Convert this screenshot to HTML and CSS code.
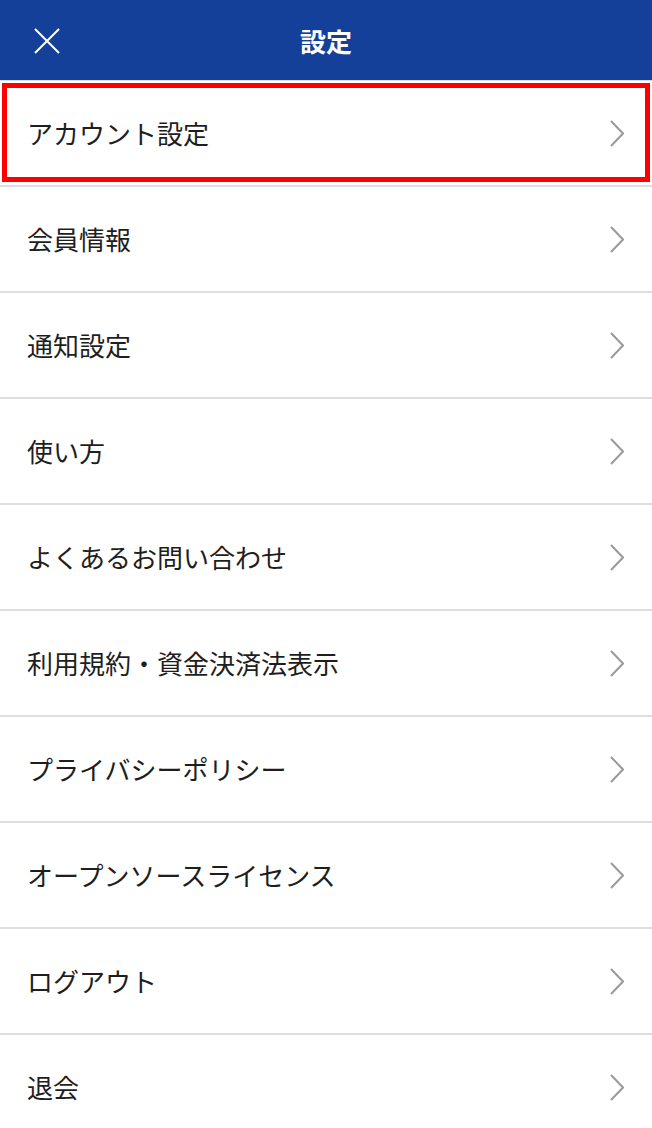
FILE: index.html
```html
<!DOCTYPE html>
<html lang="ja">
<head>
<meta charset="utf-8">
<title>設定</title>
<link rel="stylesheet" href="styles.css">
</head>
<body>
<header class="topbar">
  <button class="close" aria-label="閉じる">
    <svg width="26" height="26" viewBox="0 0 26 26"><path d="M1 1 L25 25 M25 1 L1 25" stroke="#fff" stroke-width="2" fill="none"/></svg>
  </button>
  <h1 class="title">設定</h1>
</header>
<ul class="menu">
  <li class="item"><span>アカウント設定</span><svg class="chev" width="14" height="27" viewBox="0 0 14 27"><path d="M1 1 L13 13.5 L1 26"/></svg><span class="mark"></span></li>
  <li class="item"><span>会員情報</span><svg class="chev" width="14" height="27" viewBox="0 0 14 27"><path d="M1 1 L13 13.5 L1 26"/></svg></li>
  <li class="item"><span>通知設定</span><svg class="chev" width="14" height="27" viewBox="0 0 14 27"><path d="M1 1 L13 13.5 L1 26"/></svg></li>
  <li class="item"><span>使い方</span><svg class="chev" width="14" height="27" viewBox="0 0 14 27"><path d="M1 1 L13 13.5 L1 26"/></svg></li>
  <li class="item"><span>よくあるお問い合わせ</span><svg class="chev" width="14" height="27" viewBox="0 0 14 27"><path d="M1 1 L13 13.5 L1 26"/></svg></li>
  <li class="item"><span>利用規約・資金決済法表示</span><svg class="chev" width="14" height="27" viewBox="0 0 14 27"><path d="M1 1 L13 13.5 L1 26"/></svg></li>
  <li class="item"><span>プライバシーポリシー</span><svg class="chev" width="14" height="27" viewBox="0 0 14 27"><path d="M1 1 L13 13.5 L1 26"/></svg></li>
  <li class="item"><span>オープンソースライセンス</span><svg class="chev" width="14" height="27" viewBox="0 0 14 27"><path d="M1 1 L13 13.5 L1 26"/></svg></li>
  <li class="item"><span>ログアウト</span><svg class="chev" width="14" height="27" viewBox="0 0 14 27"><path d="M1 1 L13 13.5 L1 26"/></svg></li>
  <li class="item"><span>退会</span><svg class="chev" width="14" height="27" viewBox="0 0 14 27"><path d="M1 1 L13 13.5 L1 26"/></svg></li>
</ul>
</body>
</html>
```
FILE: styles.css
```css
html, body { margin: 0; padding: 0; background: #fff; }
body { font-family: "Noto Sans CJK JP", "Noto Sans", sans-serif; color: #1e1e1e; width: 652px; overflow: hidden; }
.topbar {
  height: 80px; background: #15409a; border-bottom: 1px solid #dcdcdc;
  display: flex; align-items: center; justify-content: center; position: relative;
}
.close {
  position: absolute; left: 34px; top: 28px; padding: 0; margin: 0;
  background: none; border: 0; width: 26px; height: 26px; display: block;
}
.close svg { display: block; }
.title { margin: 0; color: #fff; font-size: 26px; font-weight: 700; }
.menu { list-style: none; margin: 0; padding: 0; }
.item {
  height: 104px; border-bottom: 2px solid #dedede; position: relative;
  display: flex; align-items: center; justify-content: space-between;
  padding: 0 28px 0 27px; font-size: 26px;
}
.item span { line-height: 1; }
.chev { display: block; fill: none; stroke: #9a9a9a; stroke-width: 2; }
.mark {
  position: absolute; left: 2px; right: 2px; top: 2px; bottom: 3px;
  border: 5px solid #f00; box-sizing: border-box;
}
```
